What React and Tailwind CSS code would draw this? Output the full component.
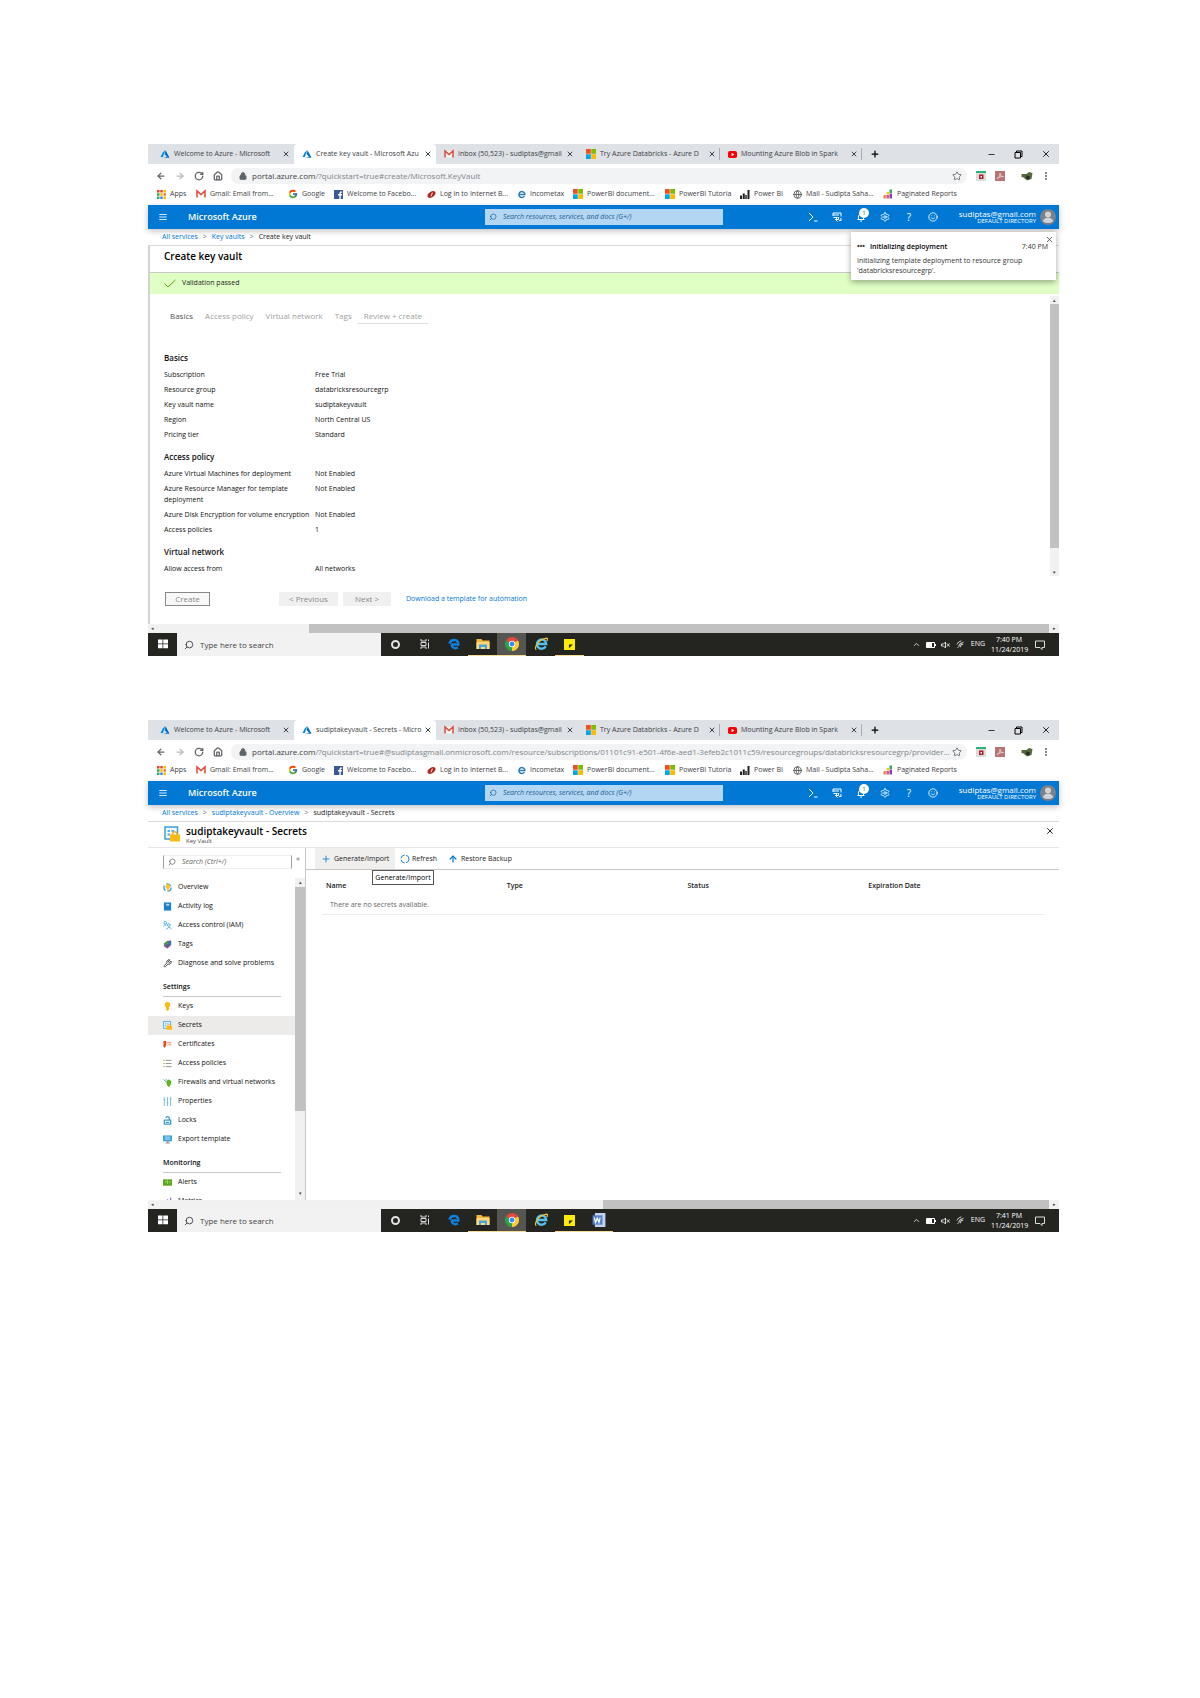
import { LuArrowLeft, LuArrowRight, LuRotateCw, LuHouse, LuLock, LuStar, LuEllipsisVertical, LuX, LuPlus, LuMinus, LuSearch, LuMenu, LuSmile, LuSettings, LuChevronUp, LuGlobe, LuWrench, LuArrowUp } from "react-icons/lu";
import { FcGoogle } from "react-icons/fc";

function AzureLogo() {
    return (
        <svg viewBox="0 0 20 20" className="size-[10px] shrink-0">
            <path d="M11 2 6 6.500 1 16h4.500z" fill="#0089d6" />
            <path d="M11.500 3 9 10l5 6-9 1.500h14z" fill="#0072c6" />
        </svg>
    )
}

function GmailLogo() {
    return (
        <svg viewBox="0 0 20 20" className="size-[10px] shrink-0">
            <path d="M2 4h16v13H2z" fill="#f5f5f5" />
            <path d="M2 17V4l8 7 8-7v13" fill="none" stroke="#dd4b39" strokeWidth="3" />
        </svg>
    )
}

function MicrosoftLogo() {
    return (
        <svg viewBox="0 0 20 20" className="size-[10px] shrink-0">
            <path d="M0 0h9.500v9.500H0z" fill="#f25022" />
            <path d="M10.500 0H20v9.500h-9.500z" fill="#7fba00" />
            <path d="M0 10.500h9.500V20H0z" fill="#00a4ef" />
            <path d="M10.500 10.500H20V20h-9.500z" fill="#ffb900" />
        </svg>
    )
}

function YoutubeLogo() {
    return (
        <svg viewBox="0 0 20 20" className="size-[9px] shrink-0">
            <rect y="2" width="20" height="16" rx="4" fill="#ff0000" />
            <path d="m8 6 6 4-6 4z" fill="#fff" />
        </svg>
    )
}

function AppsGrid() {
    const colors = ["#ea4335", "#ea4335", "#fbbc05", "#34a853", "#fbbc05", "#ea7a35", "#34a853", "#4285f4", "#fbbc05"]
    return (
        <svg viewBox="0 0 18 18" className="size-[9px] shrink-0">
            {colors.map((c, i) => (
                <rect key={i} x={(i % 3) * 6.500} y={Math.floor(i / 3) * 6.500} width="5" height="5" fill={c} />
            ))}
        </svg>
    )
}

function FacebookLogo() {
    return (
        <svg viewBox="0 0 20 20" className="size-[9px] shrink-0">
            <path d="M0 0h20v20H0z" fill="#3b5998" />
            <path d="M12 20v-8H9V9h3V7c0-3 2-4 6-3.500v2.500c-2-.2-3 0-3 1.500V9h3l-.5 3H15v8z" fill="#fff" />
        </svg>
    )
}

function BankLogo() {
    return (
        <svg viewBox="0 0 20 20" className="size-[9px] shrink-0">
            <ellipse cx="10" cy="10" rx="10" ry="6" fill="#b02a1e" transform="rotate(-35 10 10)" />
            <path d="M12 6 9 14" stroke="#fff" strokeWidth="2" />
        </svg>
    )
}

function ExplorerLogo({ className, color = "#2f7fb8", ring }) {
    return (
        <svg viewBox="0 0 24 24" className={className}>
            <path d="M20 16a8 8 0 1 1 1-4H6" fill="none" stroke={color} strokeWidth="4" />
            {ring && <path d="M4 22C-1 20 7 4 22 2c2 0 1 3 0 5" fill="none" stroke="#f5c02c" strokeWidth="2" />}
        </svg>
    )
}

function BarsLogo() {
    return (
        <svg viewBox="0 0 20 20" className="size-[10px] shrink-0">
            <path d="M0 13h4v7H0zM5.500 9h4v11h-4zM10.500 12h3v8h-3zM15 2h4v18h-4z" fill="#222" />
        </svg>
    )
}

function ReportsLogo() {
    return (
        <svg viewBox="0 0 20 20" className="size-[10px] shrink-0">
            <path d="M1 12h5v7H1z" fill="#f2884b" />
            <path d="M7 6h5v5H7z" fill="#f2c811" />
            <path d="M7 12h5v7H7z" fill="#e94f8a" />
            <path d="M13 1h5v7h-5z" fill="#37a95c" />
            <path d="M13 9h5v10h-5z" fill="#8a3fc0" />
        </svg>
    )
}

const bookmarks = [
    { label: "Apps", icon: <AppsGrid />, width: "w-[39px]" },
    { label: "Gmail: Email from...", icon: <GmailLogo />, width: "w-[92px]" },
    { label: "Google", icon: <FcGoogle className="size-[10px] shrink-0" />, width: "w-[46px]" },
    { label: "Welcome to Facebo...", icon: <FacebookLogo />, width: "w-[93px]" },
    { label: "Log in to Internet B...", icon: <BankLogo />, width: "w-[90px]" },
    { label: "Incometax", icon: <ExplorerLogo className="size-[9px] shrink-0" />, width: "w-[56px]" },
    { label: "PowerBI document...", icon: <MicrosoftLogo />, width: "w-[92px]" },
    { label: "PowerBI Tutoria", icon: <MicrosoftLogo />, width: "w-[75px]" },
    { label: "Power BI", icon: <BarsLogo />, width: "w-[53px]" },
    { label: "Mail - Sudipta Saha...", icon: <LuGlobe className="size-[9px] shrink-0" />, width: "w-[90px]" },
    { label: "Paginated Reports", icon: <ReportsLogo />, width: "w-[80px]" },
]

function BrowserTop({ title, url }) {
    const tabs = [
        { label: "Welcome to Azure - Microsoft", icon: <AzureLogo /> },
        { label: title, icon: <AzureLogo />, active: true },
        { label: "Inbox (50,523) - sudiptas@gmail", icon: <GmailLogo /> },
        { label: "Try Azure Databricks - Azure D", icon: <MicrosoftLogo />, line: true },
        { label: "Mounting Azure Blob in Spark", icon: <YoutubeLogo />, line: true },
    ]

    return (
        <header>
            <div className="flex h-5 items-center overflow-hidden bg-[#dee1e6] pl-1">
                {tabs.map((t, index) => (
                    <div key={index} className={t.active ? "flex h-full w-[142px] shrink-0 items-center rounded-t bg-white pr-1 pl-2" : "flex h-full w-[142px] shrink-0 items-center pr-1 pl-2"}>
                        {t.icon}
                        <span className="ml-1 flex-1 text-[7px] whitespace-nowrap text-[#3c4043]">{t.label}</span>
                        <button aria-label="Close tab"><LuX className="size-2 text-[#3c4043]" strokeWidth={3} /></button>
                        {t.line && <span className="-mr-1 ml-[3px] h-3 w-px bg-[#a9acb1]" />}
                    </div>
                ))}
                <button aria-label="New tab" className="ml-2"><LuPlus className="size-[10px]" strokeWidth={3} /></button>
                <div className="ml-auto flex items-center gap-[18px] pr-2 text-black">
                    <button aria-label="Minimize"><LuMinus className="size-[9px]" /></button>
                    <button aria-label="Restore">
                        <svg viewBox="0 0 18 18" className="size-[9px]" fill="none" stroke="currentColor" strokeWidth="2"><path d="M5 5V2h11v11h-3M2 5h11v11H2z" /></svg>
                    </button>
                    <button aria-label="Close window"><LuX className="size-[10px]" /></button>
                </div>
            </div>
            <div className="flex h-[23px] items-center bg-white pr-2 pl-2 text-[#5f6368]">
                <div className="flex w-[75px] shrink-0 items-center gap-[9px]">
                    <button aria-label="Back"><LuArrowLeft className="size-[10px]" strokeWidth={3} /></button>
                    <button aria-label="Forward" className="text-[#b5b8bb]"><LuArrowRight className="size-[10px]" strokeWidth={3} /></button>
                    <button aria-label="Reload"><LuRotateCw className="size-[10px]" strokeWidth={3} /></button>
                    <button aria-label="Home"><LuHouse className="size-[10px]" strokeWidth={3} /></button>
                </div>
                <div className="flex h-4 min-w-0 flex-1 items-center rounded-full bg-[#f1f3f4] pr-[5px] pl-2">
                    <LuLock className="mr-[5px] size-2 shrink-0" fill="currentColor" strokeWidth={3} />
                    <p className="flex-1 truncate text-[8px] text-[#80868b]"><span className="text-[#3c4043]">portal.azure.com</span>{url}</p>
                    <button aria-label="Bookmark this page"><LuStar className="size-[10px]" strokeWidth={2} /></button>
                </div>
                <svg viewBox="0 0 20 20" className="ml-[9px] size-[10px]"><path d="M0 0h20v20H0z" fill="#d9dddb" /><path d="M0 0h20v4H0z" fill="#2cb57b" /><path d="M6 7h9v9H6z" fill="#b3202c" /><path d="M9 10h3v3H9z" fill="#fff" /></svg>
                <svg viewBox="0 0 20 20" className="ml-[9px] size-[10px]"><path d="M0 0h20v20H0z" fill="#b87474" /><path d="M4 15c5-2 7-7 6-11 0 4 3 8 7 7-5 0-9 1-13 4z" fill="none" stroke="#efdede" strokeWidth="1.500" /></svg>
                <svg viewBox="0 0 24 20" className="ml-4 h-[10px] w-3"><path d="M1 6h10l5-4 7 2-2 12-9 3-7-6-4-1z" fill="#57693f" /><path d="m12 9 6 2-2 6-7-3z" fill="#282820" /></svg>
                <button aria-label="Menu" className="ml-2"><LuEllipsisVertical className="size-[10px]" strokeWidth={3} /></button>
            </div>
            <nav className="flex h-[18px] items-center overflow-hidden bg-white pb-1 pl-[9px]">
                {bookmarks.map(b => (
                    <a key={b.label} href="#" className={`${b.width} flex shrink-0 items-center gap-1 text-[7px] leading-3 whitespace-nowrap text-[#3c4043]`}>
                        {b.icon}
                        {b.label}
                    </a>
                ))}
            </nav>
        </header>
    )
}

function AzureBar() {
    return (
        <div className="relative z-10 flex h-6 items-center bg-[#0078d4] text-white shadow-[0_2px_6px_rgba(0,0,0,0.25)]">
            <div className="flex w-[337px] shrink-0 items-center pl-[10px]">
                <button aria-label="Show portal menu"><LuMenu className="size-[10px]" /></button>
                <span className="ml-5 text-[9px] font-semibold">Microsoft Azure</span>
            </div>
            <label className="flex h-4 w-[238px] items-center gap-[6px] bg-[#b3d7f2] px-1 text-[#1b5a94]">
                <LuSearch className="size-2 shrink-0 -scale-x-100" />
                <input type="text" aria-label="Search" placeholder="Search resources, services, and docs (G+/)" className="w-full bg-transparent text-[7px] italic placeholder:text-[#1b5a94]" />
            </label>
            <div className="ml-auto flex items-center gap-[14px]">
                <button aria-label="Cloud Shell">
                    <svg viewBox="0 0 20 20" className="size-[10px]" fill="none" stroke="currentColor" strokeWidth="2"><path d="m2 2 8 8-8 8M12 18h7" /></svg>
                </button>
                <button aria-label="Directory and subscription">
                    <svg viewBox="0 0 20 20" className="size-[10px]" fill="none" stroke="currentColor" strokeWidth="2"><path d="M2 8V2h16v7M2 6h12M3 11h8M13 10v5H7M11 11l-4 4 4 4M18 12v5h-4" /></svg>
                </button>
                <button aria-label="Notifications" className="relative">
                    <svg viewBox="0 0 20 20" className="size-[10px]" fill="none" stroke="currentColor" strokeWidth="2"><path d="M3 15h14M5 15V8q5-9 10 0v7M8 18h4" /></svg>
                    <span className="absolute -top-1 left-[3px] size-[10px] rounded-full bg-white text-[6px] leading-[10px] text-[#0078d4]">1</span>
                </button>
                <button aria-label="Settings"><LuSettings className="size-[10px]" /></button>
                <button aria-label="Help" className="w-[10px] text-[10px] leading-3">?</button>
                <button aria-label="Feedback"><LuSmile className="size-[10px]" /></button>
            </div>
            <div className="ml-3 w-[86px] text-right">
                <p className="text-[8px] leading-[9px]">sudiptas@gmail.com</p>
                <p className="text-[6px] leading-[7px]">DEFAULT DIRECTORY</p>
            </div>
            <svg viewBox="0 0 32 32" className="mr-[3px] ml-1 size-4">
                <circle cx="16" cy="16" r="16" fill="#7c7f86" />
                <circle cx="16" cy="11" r="6" fill="#d0d2d6" />
                <path d="M6 25c0-10 20-10 20 0q-10 6-20 0z" fill="#d0d2d6" />
            </svg>
        </div>
    )
}

function Breadcrumb({ items }) {
    return (
        <nav className="flex h-[17px] items-center border-b border-[#dadada] pl-[14px] text-[7px] whitespace-nowrap">
            {items.map((item, index) => (
                <span key={item} className="flex items-center">
                    {index > 0 && <span className="mx-[5px] text-[#777]">&gt;</span>}
                    {index < items.length - 1 ? <a href="#" className="text-[#0078d4]">{item}</a> : <span className="text-[#222]">{item}</span>}
                </span>
            ))}
        </nav>
    )
}

function HorizontalScroll({ start }) {
    return (
        <div className="flex h-[9px] bg-[#f1f1f1] text-[5px] leading-[9px] text-[#444]">
            <span className={`${start} pl-[3px]`}>◂</span>
            <span className="flex-1 bg-[#c1c1c1]" />
            <span className="w-[10px] text-center">▸</span>
        </div>
    )
}

function Taskbar({ time, date, word }) {
    const cell = "flex h-full w-[29px] items-center justify-center border-b border-transparent"
    const open = "flex h-full w-[29px] items-center justify-center border-b border-[#f5dc96]"

    return (
        <footer className="flex h-[23px] items-center bg-[#242520] text-white">
            <button aria-label="Start" className={cell}>
                <svg viewBox="0 0 20 20" className="size-[10px]" fill="#fff"><path d="M0 1h9v8H0zM10.500 1H20v8h-9.500zM0 10.500h9v8H0zM10.500 10.500H20v8h-9.500z" /></svg>
            </button>
            <label className="flex h-full w-[204px] items-center gap-[6px] bg-[#f2f2f2] pl-[7px] text-[#333]">
                <LuSearch className="size-[10px] -scale-x-100" />
                <input type="text" aria-label="Type here to search" placeholder="Type here to search" className="w-40 bg-transparent text-[8px] placeholder:text-[#444]" />
            </label>
            <button aria-label="Cortana" className={cell}><span className="size-[9px] rounded-full border-2 border-[#e4e4e4]" /></button>
            <button aria-label="Task view" className={cell}>
                <svg viewBox="0 0 20 20" className="size-[10px]" fill="none" stroke="#ddd" strokeWidth="2"><path d="M2 0v4h10V0M2 7h10v6H2zM2 20v-4h10v4M17 1v3M17 7v12" /></svg>
            </button>
            <button aria-label="Edge" className={cell}>
                <svg viewBox="0 0 24 24" className="size-3" fill="none" stroke="#0f7fdc" strokeWidth="5"><path d="M3 11C6 1 21 2 20.500 13H8M8 11c-2 9 6 11 12 8" /></svg>
            </button>
            <button aria-label="File Explorer" className={open}>
                <svg viewBox="0 0 28 24" className="h-3 w-[14px]"><path d="M1 2h10l2 3h14v17H1z" fill="#f5b83d" /><path d="M1 8h26v14H1z" fill="#ffd977" /><path d="M6 13h16v9h-4v-4h-8v4H6z" fill="#4ba3dd" /></svg>
            </button>
            <button aria-label="Chrome" className="flex h-full w-[29px] items-center justify-center border-b border-[#f5dc96] bg-[#555652]">
                <svg viewBox="0 0 24 24" className="size-[14px]">
                    <path d="M12 12 1.600 6A12 12 0 0 1 22.400 6z" fill="#e04a3b" />
                    <path d="M12 12 1.600 6A12 12 0 0 0 12 24z" fill="#2ba24c" />
                    <path d="M12 12V24A12 12 0 0 0 22.400 6z" fill="#fccb2f" />
                    <circle cx="12" cy="12" r="5.500" fill="#fff" />
                    <circle cx="12" cy="12" r="4.200" fill="#4285f4" />
                </svg>
            </button>
            <button aria-label="Internet Explorer" className={cell}><ExplorerLogo className="size-[14px]" color="#52c4f3" ring /></button>
            <button aria-label="Sticky Notes" className={open}>
                <svg viewBox="0 0 20 20" className="size-[11px]"><path d="M0 0h20v20H0z" fill="#ffeb00" /><path d="M9 10h7l-7 7z" fill="#222" /></svg>
            </button>
            {word && (
                <button aria-label="Word" className={open}>
                    <svg viewBox="0 0 24 24" className="size-[14px]"><path d="M5 0h18v24H5z" fill="#c3d3ee" /><path d="M1 4h17v16H1z" fill="#5b83c9" /><path d="m4 8 2 8 3-7 3 7 2-8" fill="none" stroke="#fff" strokeWidth="2" /></svg>
                </button>
            )}
            <div className="ml-auto flex items-center pr-[14px] text-[7px]">
                <LuChevronUp className="mr-[5px] size-[9px]" />
                <svg viewBox="0 0 20 12" className="mr-[5px] h-[6px] w-[10px]"><path d="M1 1h16v10H1z" fill="none" stroke="#fff" strokeWidth="2" /><path d="M1 1h11v10H1zM18 4h2v4h-2z" fill="#fff" /></svg>
                <svg viewBox="0 0 20 20" className="mr-[5px] size-[10px]" fill="none" stroke="#ddd" strokeWidth="2"><path d="M1 8h4l4-4v12l-4-4H1zM12 7l5 6M17 7l-5 6" /></svg>
                <svg viewBox="0 0 20 20" className="mr-[6px] size-[9px]" fill="none" stroke="#ddd" strokeWidth="2"><path d="M2 10A12 12 0 0 1 12 2M6 13a9 9 0 0 1 8-7M10 16a5 5 0 0 1 6-6M3 18 17 4" /></svg>
                <span>ENG</span>
                <div className="ml-[6px] w-9 text-center leading-[10px] whitespace-nowrap">
                    <p>{time}</p>
                    <p>{date}</p>
                </div>
                <svg viewBox="0 0 20 20" className="ml-2 size-[10px]" fill="none" stroke="#ddd" strokeWidth="2"><path d="M1 2h18v13h-5v4l-4-4H1z" /></svg>
            </div>
        </footer>
    )
}

const summary = [
    { heading: "Basics", rows: [["Subscription", "Free Trial"], ["Resource group", "databricksresourcegrp"], ["Key vault name", "sudiptakeyvault"], ["Region", "North Central US"], ["Pricing tier", "Standard"]] },
    { heading: "Access policy", rows: [["Azure Virtual Machines for deployment", "Not Enabled"], ["Azure Resource Manager for template deployment", "Not Enabled"], ["Azure Disk Encryption for volume encryption", "Not Enabled"], ["Access policies", "1"]] },
    { heading: "Virtual network", rows: [["Allow access from", "All networks"]] },
]

function CreateKeyVault() {
    const disabledBtn = "h-[14px] bg-[#f0f0f0] text-[8px] leading-[14px] text-[#8a8886]"

    return (
        <section className="relative bg-white">
            <BrowserTop title="Create key vault - Microsoft Azu" url="/?quickstart=true#create/Microsoft.KeyVault" />
            <AzureBar />
            <Breadcrumb items={["All services", "Key vaults", "Create key vault"]} />
            <div className="border-l-2 border-[#d2d2d2]">
                <h1 className="h-[27px] border-b border-[#c8c8c8] pl-[14px] text-[10px] leading-5 font-semibold text-black">Create key vault</h1>
                <div className="flex h-[21px] items-center gap-[6px] bg-[#dfffc4] pl-[14px] text-[7px] text-[#222]">
                    <svg viewBox="0 0 24 18" className="h-[9px] w-3" fill="none" stroke="#57a300" strokeWidth="2"><path d="m1 9 7 7L23 2" /></svg>
                    Validation passed
                </div>
                <div className="flex">
                    <div className="min-w-0 flex-1 pt-[14px] pl-[14px]">
                        <div role="tablist" className="mb-[25px] flex h-4 text-[8px] leading-4 text-[#a19f9d]">
                            <button role="tab" className="px-[6px] text-[#555]">Basics</button>
                            <button role="tab" className="px-[6px]">Access policy</button>
                            <button role="tab" className="px-[6px]">Virtual network</button>
                            <button role="tab" className="px-[6px]">Tags</button>
                            <button role="tab" className="border-b border-[#dedede] px-[6px]">Review + create</button>
                        </div>
                        {summary.map(group => (
                            <div key={group.heading} className="mb-[6px] text-[7px] leading-[11px] text-[#111]">
                                <h2 className="h-[18px] text-[8px] leading-[18px] font-semibold">{group.heading}</h2>
                                <dl>
                                    {group.rows.map(([label, value]) => (
                                        <div key={label} className="flex py-[2px]">
                                            <dt className="w-[151px] shrink-0 pr-1">{label}</dt>
                                            <dd>{value}</dd>
                                        </div>
                                    ))}
                                </dl>
                            </div>
                        ))}
                    </div>
                    <div className="mt-[2px] mb-[6px] flex w-[9px] flex-col bg-[#f1f1f1] text-center text-[5px] leading-[8px] text-[#444]">
                        <span>▴</span>
                        <span className="flex-1 bg-[#c1c1c1]" />
                        <span className="h-7 pt-5">▾</span>
                    </div>
                </div>
                <div className="flex h-[42px] items-start pt-[10px] pl-[15px]">
                    <button className="h-[14px] w-[45px] border border-[#8a8886] bg-[#f8f8f8] text-[8px] leading-3 text-[#8a8886]">Create</button>
                    <button className={`${disabledBtn} ml-[69px] w-[59px]`}>&lt; Previous</button>
                    <button className={`${disabledBtn} ml-[5px] w-12`}>Next &gt;</button>
                    <a href="#" className="ml-[15px] text-[7px] leading-[14px] text-[#0078d4]">Download a template for automation</a>
                </div>
            </div>
            <HorizontalScroll start="w-[161px]" />
            <Taskbar time="7:40 PM" date="11/24/2019" />
            <aside className="absolute top-[88px] right-[3px] z-20 h-12 w-[205px] bg-white px-[6px] pt-[10px] text-[7px] leading-[10px] text-[#333] shadow-[0_2px_6px_rgba(0,0,0,0.35)]">
                <div className="flex pr-[2px]">
                    <span className="mr-[5px] font-bold">•••</span>
                    <h2 className="font-semibold text-black">Initializing deployment</h2>
                    <time className="ml-auto">7:40 PM</time>
                </div>
                <p className="mt-1">Initializing template deployment to resource group &apos;databricksresourcegrp&apos;.</p>
                <button aria-label="Dismiss" className="absolute top-[3px] right-[2px]"><LuX className="size-[9px]" /></button>
            </aside>
        </section>
    )
}

function SecretIcon({ className }) {
    return (
        <svg viewBox="0 0 32 32" className={className}>
            <path d="M2 2h25v24H2z" fill="#f3fafd" stroke="#3f9fd2" strokeWidth="3" />
            <path d="M7 8h5v4H7zM15 8h5v4h-5zM7 15h5v4H7z" fill="#59b4d9" />
            <path d="M17 18v-3q5-7 9 0v3" fill="none" stroke="#f5ae1b" strokeWidth="3" />
            <path d="M12 17h20v14H12z" fill="#fdb813" />
        </svg>
    )
}

const ico = "size-[9px] shrink-0"

const menu = [
    { label: "Overview", icon: <svg viewBox="0 0 20 20" className={ico}><circle cx="10" cy="10" r="8" fill="none" stroke="#3d9ede" strokeWidth="3" strokeDasharray="12 5" /><path d="M6 3h9v8l-2 2v5h-4v-5l-3-2z" fill="#fcc02e" /></svg> },
    { label: "Activity log", icon: <svg viewBox="0 0 20 20" className={ico}><path d="M2 1h16v18H2z" fill="#1b7fd1" /><path d="M7 4h7v4H7z" fill="#b9dcf5" /></svg> },
    { label: "Access control (IAM)", icon: <svg viewBox="0 0 20 20" className={ico} fill="none" stroke="#43a7d6" strokeWidth="2"><circle cx="5" cy="4" r="3" /><circle cx="13" cy="9" r="3" /><path d="M1 12q3-5 7-3M8 19q4-9 11-1" /></svg> },
    { label: "Tags", icon: <svg viewBox="0 0 20 20" className={ico}><path d="m2 8 8-6 8-1v10l-8 8-8-5z" fill="#804998" /><path d="m2 8 9-7 2 5-9 8z" fill="#4c9b52" /><path d="m11 7 7-5v8l-5 4z" fill="#3b73b9" /></svg> },
    { label: "Diagnose and solve problems", icon: <LuWrench className={ico} /> },
    { section: "Settings" },
    { label: "Keys", icon: <svg viewBox="0 0 20 20" className={ico}><circle cx="10" cy="6" r="6" fill="#fdb813" /><path d="M7 10h6v7l-3 3-3-3z" fill="#fdb813" /></svg> },
    { label: "Secrets", icon: <SecretIcon className={ico} />, selected: true },
    { label: "Certificates", icon: <svg viewBox="0 0 20 20" className={ico}><path d="M2 3h17v11H2z" fill="#fde8dc" /><path d="M1 2h6v9l-3 7-3-4z" fill="#e5481d" /><path d="M9 6h9M13 10h5" stroke="#f09a73" strokeWidth="2" /></svg> },
    { label: "Access policies", icon: <svg viewBox="0 0 20 20" className={ico} strokeWidth="2"><path d="M6 3h13M6 10h13M6 17h13" stroke="#8a8a8a" /><path d="M0 3h4M0 10h4M0 17h4" stroke="#a4cf30" /></svg> },
    { label: "Firewalls and virtual networks", icon: <svg viewBox="0 0 20 20" className={ico}><path d="m1 3 6 6M7 2v4" stroke="#4aa9dc" strokeWidth="2" /><path d="M8 7q5-7 10 0v6q-3 7-5 7-5-3-5-7z" fill="#5cb31d" /></svg> },
    { label: "Properties", icon: <svg viewBox="0 0 20 20" className={ico} fill="none" stroke="#6db9df" strokeWidth="2"><path d="M3 0v20M10 0v20M17 0v20M1 6h4M8 13h4M15 5h4" /></svg> },
    { label: "Locks", icon: <svg viewBox="0 0 20 20" className={ico} fill="none" stroke="#3f9fd2" strokeWidth="3"><path d="M3 9h14v9H3zM14 9V4q-4-5-8 0M6 14h8" /></svg> },
    { label: "Export template", icon: <svg viewBox="0 0 20 20" className={ico}><path d="M0 1h20v13H0z" fill="#3f9fd2" /><path d="M4 3h12v8H4z" fill="#7cc7e8" /><path d="M8 14h5v3h3v2H5v-2h3z" fill="#999" /></svg> },
    { section: "Monitoring" },
    { label: "Alerts", icon: <svg viewBox="0 0 20 20" className={ico}><path d="M0 3h20v14H0z" fill="#5ea51b" /><path d="M10 3v10M6 7v4M15 7v4" stroke="#a5dc6c" strokeWidth="2" /></svg> },
    { label: "Metrics", icon: <svg viewBox="0 0 20 20" className={ico} fill="none" stroke="#a678e0" strokeWidth="3"><path d="M3 18V9M10 18V5M17 18V1" /></svg> },
]

function Sidebar() {
    return (
        <aside className="w-[158px] shrink-0 border-r border-[#c8c8c8]">
            <div className="flex h-[30px] items-start pt-[7px] pl-[15px]">
                <label className="flex h-[14px] w-[129px] items-center gap-[6px] border-x border-y border-x-[#a0a0a0] border-y-[#efefef] px-1">
                    <LuSearch className="size-2 -scale-x-100 text-[#555]" />
                    <input type="text" aria-label="Search menu" placeholder="Search (Ctrl+/)" className="w-24 text-[7px] italic placeholder:text-[#666]" />
                </label>
                <button aria-label="Collapse menu" className="ml-1 text-[8px] leading-[6px] text-[#555]">«</button>
            </div>
            <div className="flex h-[322px] overflow-hidden">
                <nav className="flex-1 text-[7px] text-[#111]">
                    {menu.map(m => m.section ? (
                        <h2 key={m.section} className="mr-[14px] ml-[15px] h-6 border-b border-[#c8c8c8] pt-[5px] leading-[18px] font-semibold">{m.section}</h2>
                    ) : (
                        <a key={m.label} href="#" className={m.selected ? "flex h-[19px] items-center gap-[6px] bg-[#edebe9] pl-[15px]" : "flex h-[19px] items-center gap-[6px] pl-[15px]"}>
                            {m.icon}
                            {m.label}
                        </a>
                    ))}
                </nav>
                <div className="flex w-[10px] flex-col bg-[#f1f1f1] text-center text-[5px] leading-[9px] text-[#444]">
                    <span>▴</span>
                    <span className="h-56 bg-[#c1c1c1]" />
                    <span className="mt-auto pb-[2px]">▾</span>
                </div>
            </div>
        </aside>
    )
}

function Secrets() {
    const thClass = "w-1/4 pl-1 text-left font-semibold"

    return (
        <section className="bg-white">
            <BrowserTop title="sudiptakeyvault - Secrets - Micro" url="/?quickstart=true#@sudiptasgmail.onmicrosoft.com/resource/subscriptions/01101c91-e501-4f6e-aed1-3efeb2c1011c59/resourcegroups/databricksresourcegrp/providers/Microsoft.KeyVault" />
            <AzureBar />
            <Breadcrumb items={["All services", "sudiptakeyvault - Overview", "sudiptakeyvault - Secrets"]} />
            <div className="flex h-[26px] items-start border-b border-[#e6e6e6] pt-1 pr-1 pl-4">
                <SecretIcon className="size-4" />
                <div className="ml-[6px] text-black">
                    <h1 className="text-[10px] leading-[11px] font-semibold">sudiptakeyvault - Secrets</h1>
                    <p className="text-[6px] leading-2 text-[#444]">Key Vault</p>
                </div>
                <button aria-label="Close blade" className="ml-auto"><LuX className="size-[10px]" /></button>
            </div>
            <div className="flex">
                <Sidebar />
                <div className="min-w-0 flex-1 text-[7px] text-[#222]">
                    <div className="flex h-[22px] items-center gap-[5px] border-b border-[#c8c8c8] pl-[9px]">
                        <div className="relative h-full">
                            <button className="flex h-full w-20 items-center gap-[3px] bg-[#f0efee] pt-px pl-[6px]"><LuPlus className="size-[10px] text-[#0078d4]" />Generate/Import</button>
                            <span role="tooltip" className="absolute top-[22px] left-[57px] h-[15px] w-[62px] border border-[#555] bg-white text-center leading-[13px] text-black">Generate/Import</span>
                        </div>
                        <button className="flex w-[43px] items-center gap-[2px] pt-px">
                            <svg viewBox="0 0 20 20" className="size-[10px]" fill="none" stroke="#1683d8" strokeWidth="2"><circle cx="10" cy="10" r="8" strokeDasharray="10 3" /></svg>
                            Refresh
                        </button>
                        <button className="flex items-center gap-[3px] pt-px"><LuArrowUp className="size-[10px] text-[#0078d4]" strokeWidth={3} />Restore Backup</button>
                    </div>
                    <div className="pt-[6px] pr-[14px] pl-4">
                        <table className="w-full table-fixed">
                            <thead>
                                <tr className="h-5">
                                    <th className={thClass}>Name</th>
                                    <th className={thClass}>Type</th>
                                    <th className={thClass}>Status</th>
                                    <th className={thClass}>Expiration Date</th>
                                </tr>
                            </thead>
                            <tbody>
                                <tr className="h-[18px] border-b border-[#ededed]">
                                    <td colSpan="4" className="pl-2 text-[#666]">There are no secrets available.</td>
                                </tr>
                            </tbody>
                        </table>
                    </div>
                </div>
            </div>
            <HorizontalScroll start="w-[455px]" />
            <Taskbar time="7:41 PM" date="11/24/2019" word />
        </section>
    )
}

export default function App() {
    return (
        <main className="flex min-h-screen flex-col gap-16 bg-white pt-36 pr-[141px] pb-36 pl-[148px] font-['Open_Sans','Noto_Sans',sans-serif]">
            <CreateKeyVault />
            <Secrets />
        </main>
    )
}
